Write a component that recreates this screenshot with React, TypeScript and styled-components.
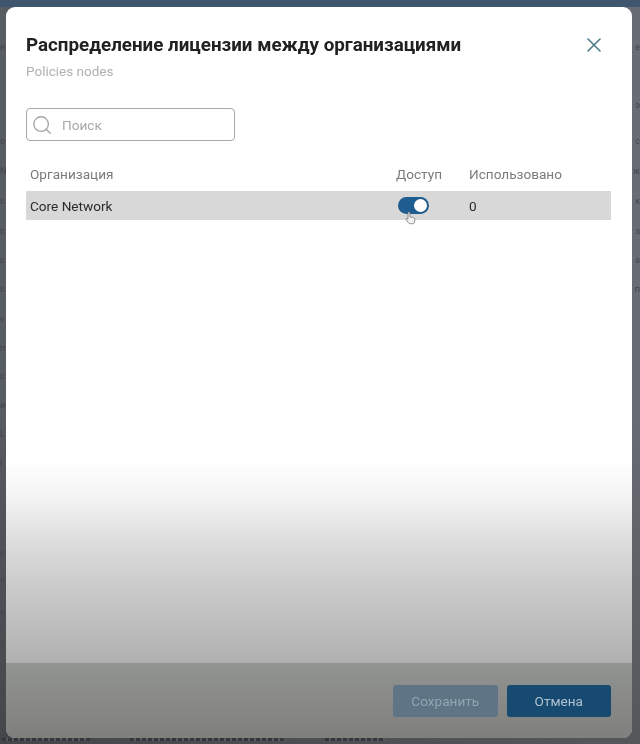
import React from 'react';
import styled, { createGlobalStyle } from 'styled-components';
import { X, Search } from 'lucide-react';

const Global = createGlobalStyle`
  html, body {
    margin: 0;
    padding: 0;
    background: #5d6268;
    font-family: Roboto, "Liberation Sans", sans-serif;
  }
`;

const Page = styled.div`
  position: relative;
  width: 640px;
  height: 744px;
  overflow: hidden;
  filter: blur(0.35px);
  background: linear-gradient(to right, rgba(0, 0, 0, 0.08) 0, rgba(255, 255, 255, 0.06) 100%),
    linear-gradient(to bottom, #5f646b 0, #5f646b 400px, #4a4c50 100%);
`;

const TopBar = styled.div`
  height: 7px;
  background: #3f566f;
`;

// page under the dialog: only the ends of its lines stick out at the sides
const Backdrop = styled.div`
  height: 731px;
  display: flex;
  flex-direction: column;
`;

const BackLine = styled.div<{ $height: number }>`
  height: ${(p) => p.$height}px;
  display: flex;
  justify-content: space-between;
  align-items: flex-end;
  font-size: 9px;
  line-height: 14px;
  color: #42464c;
`;

const BottomStrip = styled.div`
  height: 6px;
  display: flex;
  gap: 40px;
  padding-left: 2px;
`;

const StripText = styled.div<{ $width: number }>`
  width: ${(p) => p.$width}px;
  height: 3px;
  background: repeating-linear-gradient(to right, #33363a 0 4px, #55585c 4px 6px);
`;

const Modal = styled.div`
  position: absolute;
  left: 6px;
  top: 7px;
  width: 626px;
  height: 731px;
  display: flex;
  flex-direction: column;
  border-radius: 9px;
  overflow: hidden;
  background: linear-gradient(to bottom, #ffffff 0, #ffffff 452px, #f4f4f4 490px, #d6d6d6 550px, #b0b0b0 655px);
`;

const Content = styled.div`
  flex: 1;
  padding: 26px 21px 0 20px;
`;

const Header = styled.div`
  display: flex;
  justify-content: space-between;
  align-items: flex-start;
`;

const Title = styled.h1`
  margin: 0;
  font-size: 18.8px;
  line-height: 24px;
  font-weight: 700;
  color: #212121;
`;

const CloseButton = styled.button`
  border: 0;
  padding: 0;
  background: none;
  color: #4a7c8c;
  display: flex;
  margin: 0 5px 0 0;
`;

const Subtitle = styled.div`
  margin-top: 6px;
  font-size: 13.5px;
  line-height: 16px;
  color: #b0b0b0;
`;

const SearchBox = styled.label`
  margin-top: 29px;
  width: 209px;
  height: 33px;
  box-sizing: border-box;
  display: flex;
  align-items: center;
  gap: 9px;
  padding-left: 4px;
  border: 1px solid #a9a9a9;
  border-radius: 4px;
  color: #a3a3a3;
`;

const SearchInput = styled.input`
  flex: 1;
  min-width: 0;
  border: 0;
  outline: 0;
  padding: 0;
  background: none;
  font: 13.6px Roboto, sans-serif;
  &::placeholder {
    color: #a8a8a8;
    opacity: 1;
  }
`;

const Table = styled.div`
  margin-top: 17px;
`;

const Row = styled.div<{ $head?: boolean }>`
  display: grid;
  grid-template-columns: 366px 73px 1fr;
  align-items: center;
  box-sizing: border-box;
  height: ${(p) => (p.$head ? '33px' : '29px')};
  padding: ${(p) => (p.$head ? '0 0 2px 4px' : '0 0 0 4px')};
  font-size: 13.6px;
  color: ${(p) => (p.$head ? '#7b7b7b' : '#2b2b2b')};
  background: ${(p) => (p.$head ? 'none' : '#d8d8d8')};
`;

const Toggle = styled.div`
  position: relative;
  width: 31px;
  height: 17px;
  margin-left: 2px;
  border-radius: 9px;
  background: #1f5c8f;
`;

const Knob = styled.span`
  position: absolute;
  right: 2px;
  top: 2px;
  width: 13px;
  height: 13px;
  border-radius: 50%;
  background: #fff;
`;

const Pointer = styled.svg`
  position: absolute;
  left: 7px;
  top: 14px;
`;

const Footer = styled.div`
  height: 75px;
  box-sizing: border-box;
  display: flex;
  justify-content: flex-end;
  align-items: flex-start;
  gap: 9px;
  padding: 22px 21px 0 0;
  background: linear-gradient(to bottom, #929491, #7f807e);
`;

const Button = styled.button<{ $muted?: boolean }>`
  width: 104.5px;
  height: 32px;
  border: 0;
  border-radius: 3px;
  font: 13.6px Roboto, sans-serif;
  background: ${(p) => (p.$muted ? '#5f7585' : '#174a70')};
  color: ${(p) => (p.$muted ? '#94a5b0' : '#b0c2cf')};
`;

const backLines = [
  { height: 47, left: 'н', right: 'е' },
  { height: 58, left: '', right: 'э' },
  { height: 36, left: 'о', right: 'с' },
  { height: 30, left: 'N', right: 'ж' },
  { height: 30, left: 'с', right: 'к' },
  { height: 30, left: 'с', right: 'з' },
  { height: 29, left: 'с', right: 'а' },
  { height: 29, left: 'с', right: 'п' },
  { height: 30, left: 'v', right: '' },
  { height: 29, left: 'п', right: '' },
  { height: 28, left: 'с', right: '' },
  { height: 29, left: 'и', right: '' },
  { height: 29, left: 'L', right: '' },
  { height: 29, left: 'l', right: '' },
  { height: 90, left: 'е', right: '' },
  { height: 26, left: 'н', right: '' },
  { height: 33, left: 'о', right: '' },
  { height: 31, left: 'с', right: '' },
  { height: 48, left: 'о', right: '' },
];

export default function App() {
  return (
    <Page>
      <Global />
      <TopBar />
      <Backdrop>
        {backLines.map((line, i) => (
          <BackLine key={i} $height={line.height}>
            <span>{line.left}</span>
            <span>{line.right}</span>
          </BackLine>
        ))}
      </Backdrop>
      <BottomStrip>
        <StripText $width={88} />
        <StripText $width={155} />
        <StripText $width={60} />
      </BottomStrip>
      <Modal>
        <Content>
          <Header>
            <Title>Распределение лицензии между организациями</Title>
            <CloseButton>
              <X size={24} strokeWidth={1.6} />
            </CloseButton>
          </Header>
          <Subtitle>Policies nodes</Subtitle>
          <SearchBox>
            <Search size={22} strokeWidth={1.4} />
            <SearchInput placeholder="Поиск" />
          </SearchBox>
          <Table>
            <Row $head>
              <span>Организация</span>
              <span>Доступ</span>
              <span>Использовано</span>
            </Row>
            <Row>
              <span>Core Network</span>
              <Toggle>
                <Knob />
                <Pointer width="12" height="14" viewBox="0 0 12 14" fill="#f2f2f2" stroke="#777" strokeWidth="0.8">
                  <path d="M3.5 1.2c.7-.5 1.4 0 1.4.7v4l3.6.8c1 .2 1.6.9 1.4 2l-.5 2.6c-.1.8-.8 1.4-1.6 1.4H5c-.6 0-1-.3-1.4-.8L1 8.6c-.4-.6 0-1.3.8-1.1l1.2.6V2c0-.3.2-.6.5-.8z" />
                </Pointer>
              </Toggle>
              <span>0</span>
            </Row>
          </Table>
        </Content>
        <Footer>
          <Button $muted>Сохранить</Button>
          <Button>Отмена</Button>
        </Footer>
      </Modal>
    </Page>
  );
}
